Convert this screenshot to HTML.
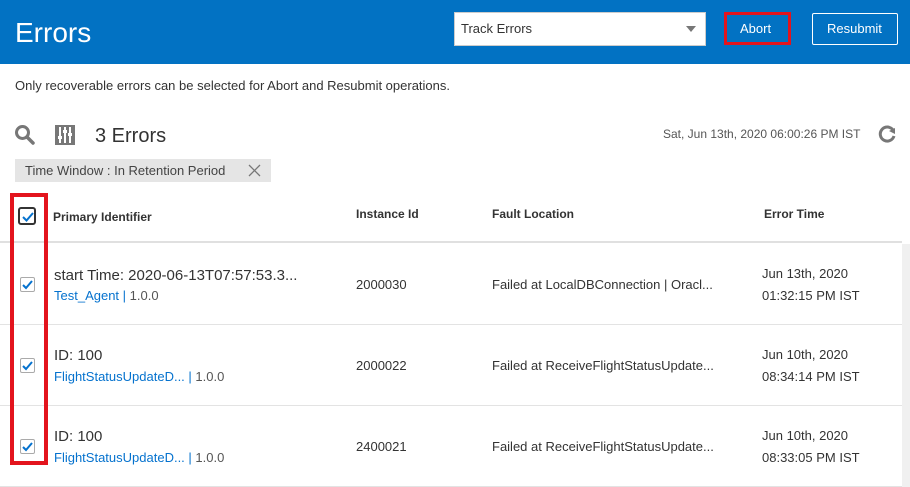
<!DOCTYPE html>
<html><head><style>
*{margin:0;padding:0;box-sizing:border-box}
body{width:910px;height:487px;overflow:hidden;background:#fff;font-family:"Liberation Sans",sans-serif;color:#333;position:relative}
.a{position:absolute;white-space:nowrap}
.hdr{left:0;top:0;width:910px;height:64px;background:#0272c3}
.cb{position:absolute;width:15px;height:15px;border:1px solid #aaa;background:#fff;border-radius:2px}
.cb svg{position:absolute;left:1px;top:1px}
.t{font-size:13px;color:#333}
.lnk{font-size:13px;color:#0572ce}
.h{font-size:12px;font-weight:bold;color:#333}
.line{position:absolute;left:0;width:902px;height:1px;background:#e3e3e3}
</style></head><body>
<div class="a hdr"></div>
<div class="a" style="left:15px;top:17px;font-size:28px;color:#fff;font-weight:300">Errors</div>
<div class="a" style="left:454px;top:12px;width:252px;height:34px;background:#fff;border:1px solid #ccc"></div>
<div class="a" style="left:461px;top:21px;font-size:13px;color:#333">Track Errors</div>
<div class="a" style="left:686px;top:26px;width:0;height:0;border-left:5px solid transparent;border-right:5px solid transparent;border-top:6px solid #777"></div>
<div class="a" style="left:724px;top:12px;width:67px;height:33px;border:3px solid #e3141d"></div>
<div class="a" style="left:740px;top:21px;font-size:13px;color:#fff">Abort</div>
<div class="a" style="left:812px;top:13px;width:86px;height:32px;border:1px solid #fff;border-radius:2px"></div>
<div class="a" style="left:827px;top:21px;font-size:13px;color:#fff">Resubmit</div>
<div class="a t" style="left:15px;top:78px">Only recoverable errors can be selected for Abort and Resubmit operations.</div>
<svg class="a" style="left:14px;top:124px" width="22" height="22" viewBox="0 0 22 22"><circle cx="8.5" cy="8.5" r="6" fill="none" stroke="#777" stroke-width="3"/><path d="M13 13l6 6" stroke="#777" stroke-width="3.5" stroke-linecap="round"/></svg>
<svg class="a" style="left:55px;top:125px" width="20" height="20" viewBox="0 0 20 20"><rect width="20" height="20" fill="#777"/><path d="M5 2v16M10 2v16M15 2v16" stroke="#fff" stroke-width="2"/><rect x="3" y="11" width="4" height="3" fill="#fff"/><rect x="8" y="5" width="4" height="3" fill="#fff"/><rect x="13" y="8" width="4" height="3" fill="#fff"/></svg>
<div class="a" style="left:95px;top:125px;font-size:20px;color:#333">3 Errors</div>
<div class="a" style="left:663px;top:127px;font-size:12px;color:#555">Sat, Jun 13th, 2020 06:00:26 PM IST</div>
<svg class="a" style="left:877px;top:124px" width="20" height="20" viewBox="0 0 20 20"><path d="M16 6A7 7 0 1 0 17 12" fill="none" stroke="#777" stroke-width="3"/><path d="M12 7l6-3v6z" fill="#777"/></svg>
<div class="a" style="left:15px;top:159px;width:256px;height:23px;background:#e5e5e5"></div>
<div class="a" style="left:25px;top:163px;font-size:13px;color:#444">Time Window : In Retention Period</div>
<svg class="a" style="left:248px;top:164px" width="13" height="13"><path d="M1 1l11 11M12 1L1 12" stroke="#777" stroke-width="1.3"/></svg>
<div class="cb" style="left:18px;top:207px;width:18px;height:18px;border:2px solid #333;border-radius:3px"><svg width="14" height="14"><path d="M2 7l3.5 3.5L12 3" fill="none" stroke="#0572ce" stroke-width="2"/></svg></div>
<div class="a h" style="left:53px;top:210px">Primary Identifier</div>
<div class="a h" style="left:356px;top:207px">Instance Id</div>
<div class="a h" style="left:492px;top:207px">Fault Location</div>
<div class="a h" style="left:764px;top:207px">Error Time</div>
<div class="a" style="left:0;top:241px;width:902px;height:2px;background:#e0e0e0"></div>
<div class="a" style="left:902px;top:244px;width:8px;height:243px;background:#f0f0f0"></div>
<div class="line" style="top:324px"></div>
<div class="line" style="top:405px"></div>
<div class="line" style="top:486px"></div>

<div class="cb" style="left:20px;top:277px"><svg width="12" height="12"><path d="M1 6l3 3 6-7" fill="none" stroke="#0572ce" stroke-width="2"/></svg></div>
<div class="a" style="left:54px;top:267px;font-size:15px;color:#333">start Time: 2020-06-13T07:57:53.3...</div>
<div class="a lnk" style="left:54px;top:288px">Test_Agent | <span style="color:#555">1.0.0</span></div>
<div class="a t" style="left:356px;top:277px">2000030</div>
<div class="a t" style="left:492px;top:277px">Failed at LocalDBConnection | Oracl...</div>
<div class="a t" style="left:762px;top:266px">Jun 13th, 2020</div>
<div class="a t" style="left:762px;top:288px">01:32:15 PM IST</div>

<div class="cb" style="left:20px;top:358px"><svg width="12" height="12"><path d="M1 6l3 3 6-7" fill="none" stroke="#0572ce" stroke-width="2"/></svg></div>
<div class="a" style="left:54px;top:347px;font-size:15px;color:#333">ID: 100</div>
<div class="a lnk" style="left:54px;top:369px">FlightStatusUpdateD... | <span style="color:#555">1.0.0</span></div>
<div class="a t" style="left:356px;top:358px">2000022</div>
<div class="a t" style="left:492px;top:358px">Failed at ReceiveFlightStatusUpdate...</div>
<div class="a t" style="left:762px;top:347px">Jun 10th, 2020</div>
<div class="a t" style="left:762px;top:369px">08:34:14 PM IST</div>

<div class="cb" style="left:20px;top:439px"><svg width="12" height="12"><path d="M1 6l3 3 6-7" fill="none" stroke="#0572ce" stroke-width="2"/></svg></div>
<div class="a" style="left:54px;top:428px;font-size:15px;color:#333">ID: 100</div>
<div class="a lnk" style="left:54px;top:450px">FlightStatusUpdateD... | <span style="color:#555">1.0.0</span></div>
<div class="a t" style="left:356px;top:439px">2400021</div>
<div class="a t" style="left:492px;top:439px">Failed at ReceiveFlightStatusUpdate...</div>
<div class="a t" style="left:762px;top:428px">Jun 10th, 2020</div>
<div class="a t" style="left:762px;top:450px">08:33:05 PM IST</div>

<div class="a" style="left:10px;top:193px;width:38px;height:272px;border:4px solid #e3141d"></div>
</body></html>
